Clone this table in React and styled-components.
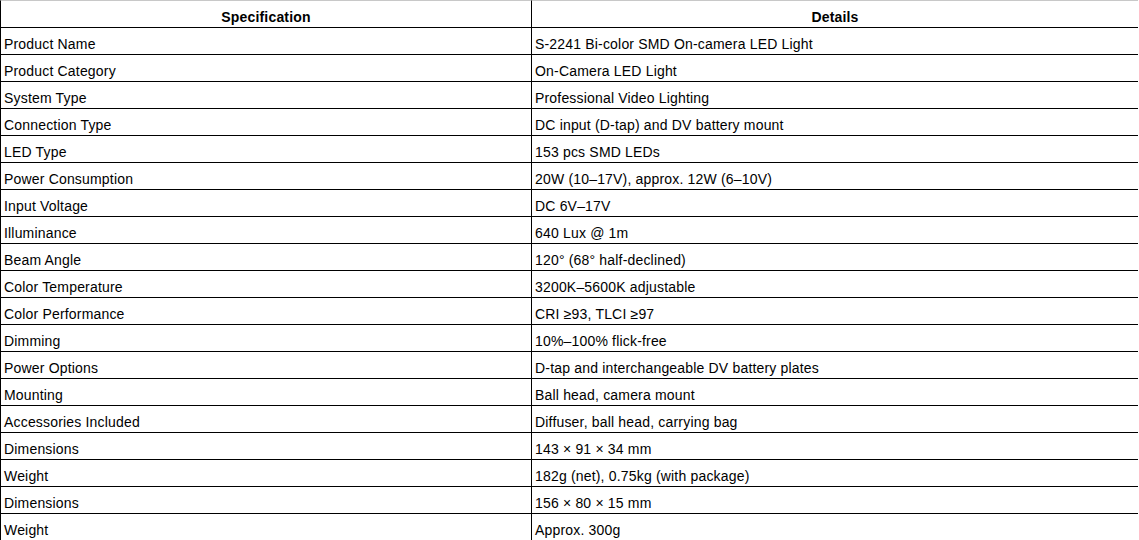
import React from "react";
import styled, { createGlobalStyle } from "styled-components";

const GlobalStyle = createGlobalStyle`
  body {
    margin: 0;
    background: #fff;
    font-family: "Liberation Sans", Arial, sans-serif;
    color: #000;
  }
`;

const SpecTable = styled.table`
  width: 1138px;
  border-collapse: separate;
  border-spacing: 0;
  table-layout: fixed;
  font-size: 14px;
  line-height: 16px;
  letter-spacing: 0.18px;
`;

const HeadCell = styled.th`
  border-top: 1px solid #c8c8c8;
  border-left: 1px solid #000;
  border-bottom: 1px solid #000;
  padding: 8px 3px 2px;
  font-weight: bold;
  text-align: center;
  white-space: nowrap;
`;

const Cell = styled.td`
  border-left: 1px solid #000;
  border-bottom: 1px solid #000;
  padding: 8px 3px 2px;
  text-align: left;
  white-space: nowrap;
`;

const specs = [
  ["Product Name", "S-2241 Bi-color SMD On-camera LED Light"],
  ["Product Category", "On-Camera LED Light"],
  ["System Type", "Professional Video Lighting"],
  ["Connection Type", "DC input (D-tap) and DV battery mount"],
  ["LED Type", "153 pcs SMD LEDs"],
  ["Power Consumption", "20W (10–17V), approx. 12W (6–10V)"],
  ["Input Voltage", "DC 6V–17V"],
  ["Illuminance", "640 Lux @ 1m"],
  ["Beam Angle", "120° (68° half-declined)"],
  ["Color Temperature", "3200K–5600K adjustable"],
  ["Color Performance", "CRI ≥93, TLCI ≥97"],
  ["Dimming", "10%–100% flick-free"],
  ["Power Options", "D-tap and interchangeable DV battery plates"],
  ["Mounting", "Ball head, camera mount"],
  ["Accessories Included", "Diffuser, ball head, carrying bag"],
  ["Dimensions", "143 × 91 × 34 mm"],
  ["Weight", "182g (net), 0.75kg (with package)"],
  ["Dimensions", "156 × 80 × 15 mm"],
  ["Weight", "Approx. 300g"],
];

export default function App() {
  return (
    <>
      <GlobalStyle />
      <SpecTable>
        <colgroup>
          <col style={{ width: 531 }} />
          <col />
        </colgroup>
        <thead>
          <tr>
            <HeadCell>Specification</HeadCell>
            <HeadCell>Details</HeadCell>
          </tr>
        </thead>
        <tbody>
          {specs.map(([name, value], i) => (
            <tr key={i}>
              <Cell>{name}</Cell>
              <Cell>{value}</Cell>
            </tr>
          ))}
        </tbody>
      </SpecTable>
    </>
  );
}
